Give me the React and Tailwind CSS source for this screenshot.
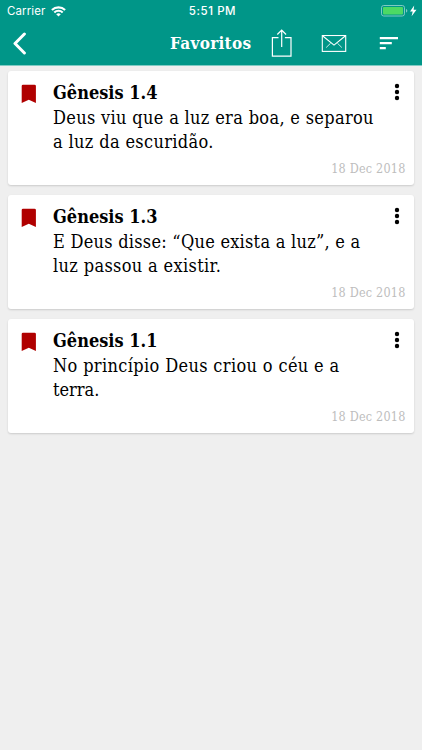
import { useState } from 'react'

const initialVerses = [
  {
    id: 4,
    title: 'Gênesis 1.4',
    lines: [
      { text: 'Deus viu que a luz era boa, e separou', spacing: 'tracking-[0.33px]' },
      { text: 'a luz da escuridão.', spacing: 'tracking-[0.35px]' },
    ],
    date: '18 Dec 2018',
  },
  {
    id: 3,
    title: 'Gênesis 1.3',
    lines: [
      { text: 'E Deus disse: “Que exista a luz”, e a', spacing: 'tracking-[0.26px]' },
      { text: 'luz passou a existir.', spacing: 'tracking-[0.35px]' },
    ],
    date: '18 Dec 2018',
  },
  {
    id: 1,
    title: 'Gênesis 1.1',
    lines: [
      { text: 'No princípio Deus criou o céu e a', spacing: 'tracking-[0.36px]' },
      { text: 'terra.', spacing: 'tracking-[0px]' },
    ],
    date: '18 Dec 2018',
  },
]

function WifiIcon() {
  return (
    <svg width="15" height="11" viewBox="0 0 15 11" fill="none" stroke="currentColor" strokeWidth="2.1">
      <path d="M0.9 4.1a9.4 9.4 0 0 1 13.2 0" />
      <path d="M3.3 6.5a6 6 0 0 1 8.4 0" />
      <path d="M7.5 10.6 5.2 8.3a3.3 3.3 0 0 1 4.6 0z" fill="currentColor" stroke="none" />
    </svg>
  )
}

function BatteryIcon() {
  return (
    <svg width="37" height="12" viewBox="0 0 37 12" fill="none">
      <rect x="0.5" y="0.5" width="23" height="10.5" rx="2.2" stroke="#7fcac3" />
      <rect x="2" y="2" width="20" height="7.5" rx="1" fill="#4cd964" />
      <path d="M25 4v3.6c1-.3 1.3-1 1.3-1.8S26 4.3 25 4z" fill="#7fcac3" />
      <path d="M33.2.5 29 6.4h2.7l-1.1 4.9 4.9-6.6h-2.9z" fill="white" />
    </svg>
  )
}

function StatusBar() {
  return (
    <div className="grid grid-cols-3 items-center h-[22px] font-[Inter,sans-serif] text-[11.5px]">
      <div className="flex items-center gap-[6px] pl-[7px] pt-[1px] tracking-[0.1px]">
        Carrier
        <WifiIcon />
      </div>
      <div className="text-center font-medium tracking-[0.55px] pl-[3px] pt-[1px]">5:51 PM</div>
      <div className="flex justify-end pr-[4px]">
        <BatteryIcon />
      </div>
    </div>
  )
}

function Header() {
  return (
    <header className="h-[66px] bg-[#009688] text-white border-b border-[#80cbc4]">
      <StatusBar />
      <div className="flex items-center h-[43px]">
        <button type="button" aria-label="Voltar" className="ml-[12px] w-[15px]">
          <svg width="15" height="23" viewBox="0 0 15 23" fill="none" stroke="currentColor" strokeWidth="3" strokeLinecap="round" strokeLinejoin="round">
            <path d="M12.4 2 3 11.5l9.4 9.5" />
          </svg>
        </button>
        <h1 className="ml-[143px] w-[101px] whitespace-nowrap text-[17px] font-bold tracking-[0.3px]">
          Favoritos
        </h1>
        <button type="button" aria-label="Compartilhar" className="w-[22px]">
          <svg width="22" height="30" viewBox="0 0 22 30" fill="none" stroke="currentColor" strokeWidth="1.2">
            <path d="M7.5 8.6H1.4v18.6H20V8.6h-6.100" />
            <path d="M10.700 18V1.100M6.300 5.500l4.400-4.400 4.400 4.400" />
          </svg>
        </button>
        <button type="button" aria-label="Enviar" className="ml-[28px] w-[26px]">
          <svg width="26" height="18" viewBox="0 0 26 18" fill="none" stroke="currentColor" strokeWidth="1.1">
            <rect x="1.3" y=".5" width="23.4" height="15.9" />
            <path d="m1.500.8 11.500 9.300L24.500.8" />
            <path d="m5.200 12.500 4.400-4.300M20.800 12.500l-4.400-4.300" strokeWidth="0.8" />
          </svg>
        </button>
        <button type="button" aria-label="Ordenar" className="ml-[32px] w-[20px]">
          <svg width="20" height="14" viewBox="0 0 20 14" fill="currentColor">
            <path d="M.8 0H19v2.200H.8zM.8 5.100h12v2.100H.8zM.8 10.100h6v2.200h-6z" />
          </svg>
        </button>
      </div>
    </header>
  )
}

function VerseCard({ verse }) {
  return (
    <article className="flex h-[114px] rounded-[3px] bg-white shadow-[0_1px_2px_rgba(0,0,0,0.15)]">
      <svg className="mt-[13px] ml-[13px] shrink-0" width="16" height="20" viewBox="0 0 16 20" fill="#b00000">
        <path d="M.7 2Q.7.7 2 .7h11.5Q14.9.7 14.9 2v17L7.8 15.800.7 19z" />
      </svg>
      <div className="flex flex-1 flex-col pl-[16px] pr-[8.5px] pt-[9px]">
        <div className="flex h-[26px] justify-between">
          <h2 className="whitespace-nowrap text-[18px] leading-[26px] font-bold tracking-[0px]">{verse.title}</h2>
          <button type="button" aria-label="Mais opções" className="mt-[3px] mr-[5.5px] h-[18px]">
            <svg width="6" height="18" viewBox="0 0 6 18" fill="#000">
              <circle cx="3" cy="3" r="2.2" />
              <circle cx="3" cy="9" r="2.2" />
              <circle cx="3" cy="15" r="2.2" />
            </svg>
          </button>
        </div>
        <p className="text-[18px] leading-6">
          {verse.lines.map((line) => (
            <span key={line.text} className={`block whitespace-nowrap ${line.spacing}`}>
              {line.text}
            </span>
          ))}
        </p>
        <time className="mt-[7px] text-right text-[12.5px] leading-[16px] tracking-[0.2px] text-[#bdbdbd]">
          {verse.date}
        </time>
      </div>
    </article>
  )
}

function App() {
  const [verses] = useState(initialVerses)

  return (
    <div className="min-h-screen bg-[#efefef] font-['DejaVu_Serif_Condensed','DejaVu_Serif',serif] text-black">
      <Header />
      <main className="flex flex-col gap-[10px] px-[8px] pt-[5px]">
        {verses.map((verse) => (
          <VerseCard key={verse.id} verse={verse} />
        ))}
      </main>
    </div>
  )
}

export default App
